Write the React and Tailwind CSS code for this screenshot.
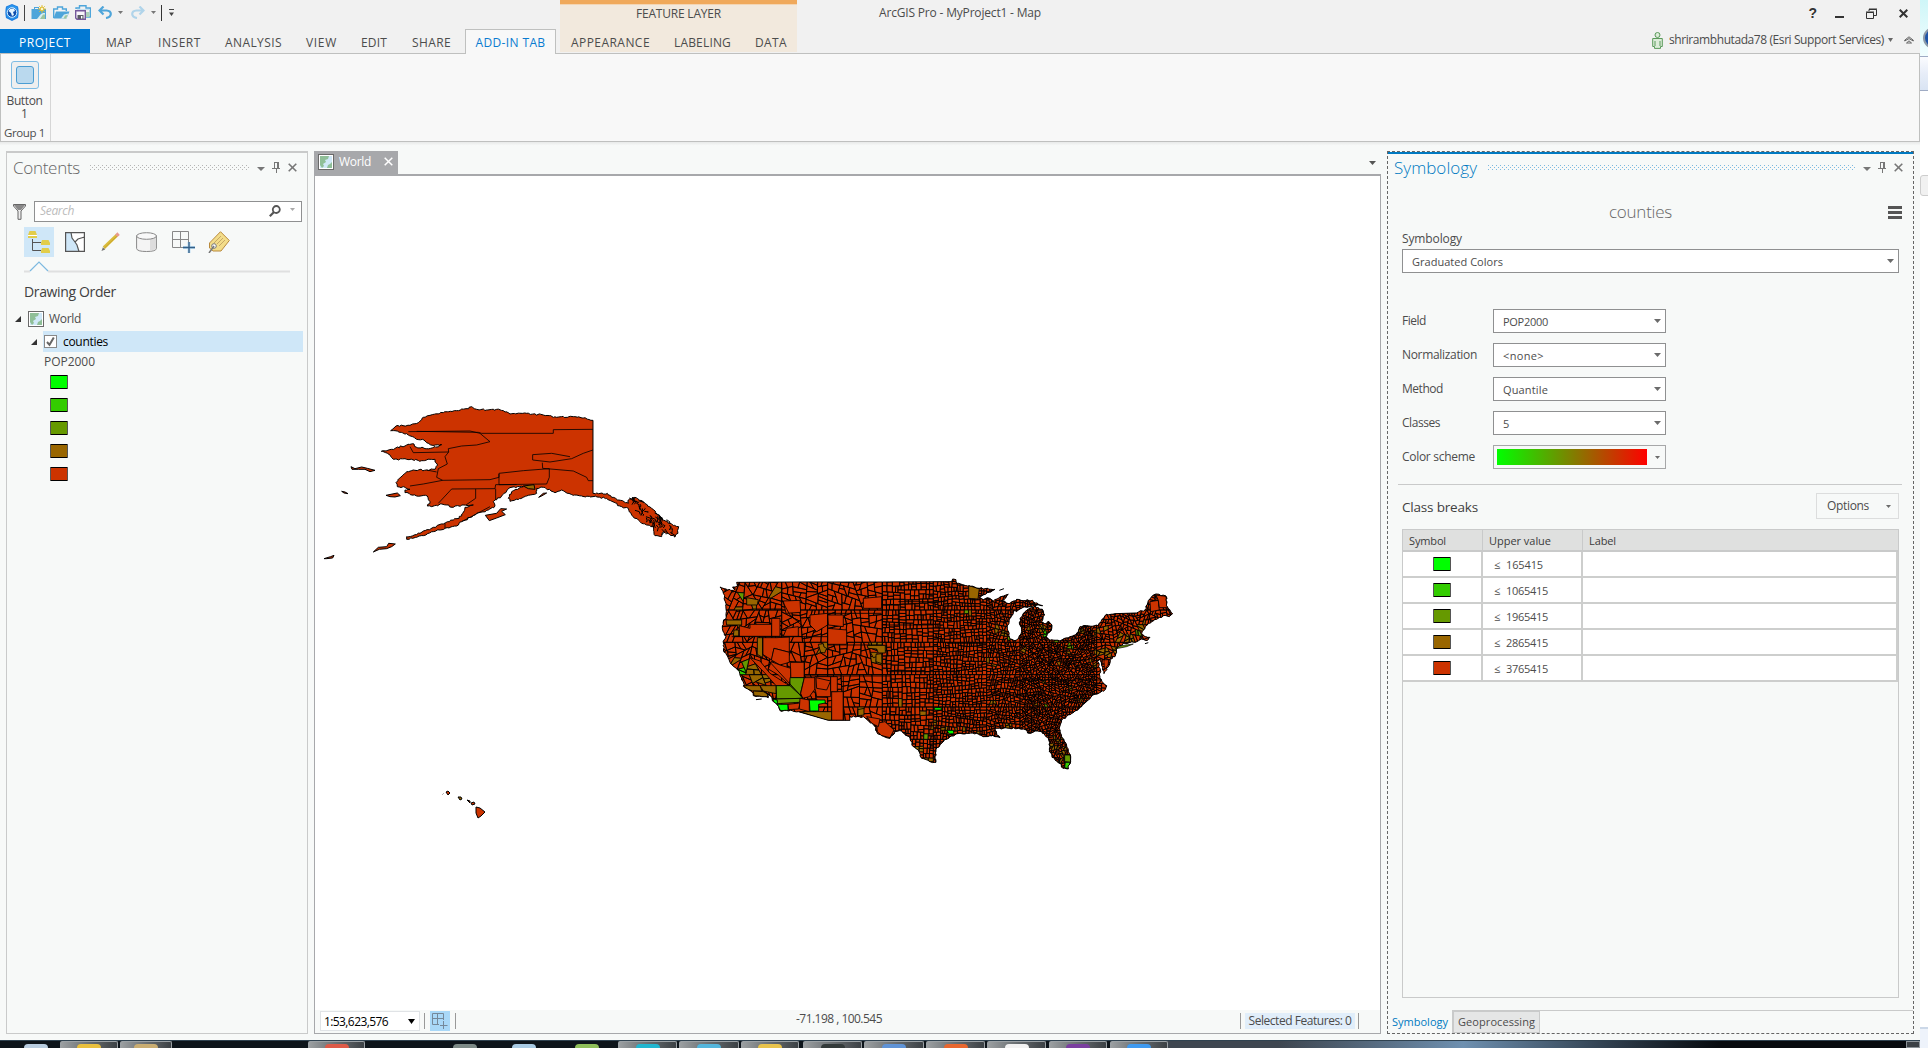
import React, { useLayoutEffect, useRef, useState } from "react";

/* Text run whose tracking is fitted to a given width. */
function T({ w, className = "", children }) {
  const ref = useRef(null);
  const [ls, setLs] = useState(0);
  useLayoutEffect(() => {
    if (!w) return;
    const el = ref.current;
    const n = el.textContent.length;
    const range = document.createRange();
    range.selectNodeContents(el);
    setLs((w - range.getBoundingClientRect().width) / n);
  }, [w]);
  return (
    <span ref={ref} className={"whitespace-nowrap shrink-0 " + className} style={{ letterSpacing: ls + "px" }}>
      {children}
    </span>
  );
}

const Caret = ({ className = "text-[#6b6b6b]", w = 6, h = 4 }) => (
  <svg className={"shrink-0 " + className} width={w} height={h} viewBox="0 0 6 4" preserveAspectRatio="none">
    <path d="M0 0H6L3 4Z" fill="currentColor" />
  </svg>
);

function Dots({ id, color, className }) {
  return (
    <svg className={"shrink-0 " + className} height="5" shapeRendering="crispEdges">
      <pattern id={id} width="4" height="4" patternUnits="userSpaceOnUse">
        <rect width="1" height="1" fill={color} />
        <rect x="2" y="2" width="1" height="1" fill={color} />
      </pattern>
      <rect width="100%" height="5" fill={`url(#${id})`} />
    </svg>
  );
}

const Pin = () => (
  <svg width="8" height="11" viewBox="0 0 8 11" fill="#777" shapeRendering="crispEdges">
    <path d="M2 0H6V1H2ZM2 0H3V7H2ZM5 0H7V7H5ZM0 6H8V7H0ZM4 7H5V11H4Z" />
  </svg>
);
const Cross = ({ c = "#777", s = 9, sw = 1.6 }) => (
  <svg width={s} height={s} viewBox="0 0 9 9" stroke={c} strokeWidth={sw}>
    <path d="M.7 .7L8.3 8.3M8.3 .7L.7 8.3" />
  </svg>
);
const MapIcon = () => (
  <svg className="shrink-0" width="16" height="16" viewBox="0 0 16 16">
    <rect x=".5" y=".5" width="15" height="15" fill="#fff" stroke="#6a6a6a" />
    <rect x="2" y="2" width="12" height="12" fill="#cfe8f7" />
    <path d="M2 2H11L10 5L7 6L8 8L5 10L6 12L4 14L2 11ZM14 8V14H9L10 11L12 10Z" fill="#8fbf98" />
  </svg>
);

const Globe = () => (
  <svg width="14" height="17" viewBox="0 0 14 17">
    <path d="M7 0L13 2.5Q14.3 8.5 13 14L7 17L1 14Q-.3 8.5 1 2.5Z" fill="#1f7fe0" />
    <path d="M7 1L12 3Q13 8 12 13L7 15.5L2 13Q1 8 2 3Z" fill="#2c97ee" />
    <circle cx="7" cy="8.5" r="4.8" fill="#0d4fae" stroke="#d9f0ff" />
    <path d="M5 5L9 4.5L10 7L8 8L9 11L7 12L6 9L3.5 7Z" fill="#e6f6ff" />
  </svg>
);
const NewProj = () => (
  <svg width="16" height="15" viewBox="0 0 16 15">
    <path d="M.5 14V4H3V2H8V4H15V14Z" fill="#4ea5da" />
    <path d="M4 3H7V4H4Z" fill="#f1f1f1" />
    <path d="M6 14L10 9L12 8H14V14Z" fill="#d7edf0" />
    <path d="M9 14L12 9.5H14V14Z" fill="#9cc59f" />
    <g stroke="#e3c02e" strokeWidth=".9"><path d="M11 0V8M7 4H15M8.2 1.2L13.8 6.8M13.8 1.2L8.2 6.8" /></g>
    <circle cx="11" cy="4" r="1.9" fill="#fff6c7" stroke="#dcb92b" />
  </svg>
);
const OpenProj = () => (
  <svg width="17" height="13" viewBox="0 0 17 13">
    <path d="M.7 12V3H4.5V1H9.5V3H13.3V5" fill="#f4f4f4" stroke="#4ea5da" strokeWidth="1.4" />
    <path d="M3 5.5H16.5L13.5 12.5H.5Z" fill="#4ea5da" />
    <path d="M8 12.5L11 8.5L15.3 7.5L13.5 12.5Z" fill="#d7edf0" />
    <path d="M10.5 12.5L12 9.5L14.5 9L13.2 12.5Z" fill="#9cc59f" />
  </svg>
);
const SaveProj = () => (
  <svg width="16" height="15" viewBox="0 0 16 15">
    <path d="M1 4V3H4.5V.8H11V3H15.3V12H11" fill="none" stroke="#4ea5da" strokeWidth="1.4" />
    <path d="M2 4H15V5H2Z" fill="#c5e0f1" />
    <path d="M11 7H14.5V12H11Z" fill="#a9d0b6" />
    <path d="M.7 5.7H10.3V14.3H2L.7 13Z" fill="#f7f3fa" stroke="#75579b" strokeWidth="1.4" />
    <path d="M2.5 10H8.5V14H2.5Z" fill="#5b5b66" />
    <path d="M6 11H7.4V13.5H6Z" fill="#fff" />
  </svg>
);
const Undo = ({ flip, c }) => (
  <svg width="14" height="13" viewBox="0 0 14 13" className={flip ? "-scale-x-100" : ""} fill="none" stroke={c} strokeWidth="2.2">
    <path d="M5.5 .5L1.5 4.5L5.5 8.5M2 4.5H8.5Q12.8 4.8 12.8 8Q12.6 11.4 8 12" />
  </svg>
);

const tabs = [["MAP", 26, "ml-4"], ["INSERT", 43, "ml-[26px]"], ["ANALYSIS", 57, "ml-[24px]"], ["VIEW", 31, "ml-[24px]"], ["EDIT", 26, "ml-[24px]"], ["SHARE", 39, "ml-[25px]"]];

function Header() {
  return (
    <header className="flex h-[53px] bg-[#f1f1f1] text-[12px] text-[#4c4c4c]">
      <div className="flex w-[560px] shrink-0 flex-col">
        <div className="flex h-[29px] items-center pb-[4px] pl-[5px]">
          <Globe />
          <i className="ml-[5px] h-4 w-px bg-[#444]" />
          <span className="ml-[6px]"><NewProj /></span>
          <span className="ml-[6px]"><OpenProj /></span>
          <span className="ml-[5px]"><SaveProj /></span>
          <span className="ml-[7px]"><Undo c="#4ea5da" /></span>
          <Caret className="ml-[6px] text-[#777]" w={5} h={3} />
          <span className="ml-[8px]"><Undo flip c="#b0d4ea" /></span>
          <Caret className="ml-[6px] text-[#777]" w={5} h={3} />
          <i className="ml-[5px] h-4 w-px bg-[#333]" />
          <svg className="ml-[7px]" width="5" height="7" viewBox="0 0 5 7"><path d="M0 0H5V1H0ZM0 3.5H5L2.5 7Z" fill="#444" /></svg>
        </div>
        <div className="flex h-6 items-center">
          <div className="flex h-6 w-[90px] items-center justify-center bg-[#0078d2] pb-px pt-1 text-white"><T w={52}>PROJECT</T></div>
          {tabs.map(([t, w, m]) => <T key={t} w={w} className={m + " pt-[3px]"}>{t}</T>)}
          <div className="relative z-10 ml-[14px] flex h-[25px] w-[91px] shrink-0 items-center justify-center self-start border border-b-0 border-[#bfc0bf] bg-[#f8f8f8] pt-[2px] text-[#0a7bd0]"><T w={70}>ADD-IN TAB</T></div>
        </div>
      </div>
      <div className="flex h-[52px] w-[237px] shrink-0 flex-col border-t-4 border-[#f0a95b] bg-[#f2e9dd]">
        <div className="h-px bg-[#f4d5b3]" />
        <div className="flex h-[19px] justify-center"><T w={85} className="leading-[17px]">FEATURE LAYER</T></div>
        <div className="flex flex-1 items-center pl-[11px] pt-[9px]">
          <T w={79}>APPEARANCE</T><T w={57} className="ml-[24px]">LABELING</T><T w={32} className="ml-[24px]">DATA</T>
        </div>
      </div>
      <div className="flex flex-1 flex-col">
        <div className="flex h-[26px] items-center pl-[82px] pr-[12px]">
          <T w={162}>ArcGIS Pro - MyProject1 - Map</T>
          <span className="ml-auto mr-[2px] font-['Liberation_Sans'] text-[14px] font-semibold leading-none text-[#333]">?</span>
          <svg className="ml-[15px]" width="10" height="12"><path d="M1 9H10V11H1Z" fill="#333" /></svg>
          <svg className="ml-[22px]" width="11" height="11" viewBox="0 0 11 11" fill="none" stroke="#333"><path d="M.5 4.5H7.5V10.5H.5ZM0 4H8M3 3V1.5H10.5V7.5H8M3 1H11" /></svg>
          <span className="ml-[22px]"><Cross c="#333" s={9} sw={2} /></span>
        </div>
        <div className="flex flex-1 items-center justify-end pr-[6px] pt-px">
          <svg width="11" height="17" viewBox="0 0 11 17" fill="#dcecd9" stroke="#5b9a5b"><circle cx="5.5" cy="3" r="2.5" /><path d="M.7 6.5H10.3V14.5H8.5V16.4H2.5V14.5H.7ZM3 9V14M8 9V14" /></svg>
          <T w={215} className="ml-[6px]">shrirambhutada78 (Esri Support Services)</T>
          <Caret className="ml-[4px] text-[#666]" w={5} h={4} />
          <svg className="ml-[11px]" width="10" height="8" viewBox="0 0 10 8" fill="none" stroke="#555" strokeWidth=".9"><path d="M.7 4.2L5 .8L9.3 4.2V5L5 2.6L.7 5ZM2.5 7L5 4.8L7.5 7Z" /></svg>
        </div>
      </div>
    </header>
  );
}

function Ribbon() {
  return (
    <section className="flex h-[89px] border border-[#bfc0bf] bg-[#f8f8f8] text-[12px] text-[#4c4c4c]">
      <div className="flex w-[50px] shrink-0 flex-col items-center border-r border-[#d6d6d6] pr-[2px]">
        <div className="mt-[7px] flex h-7 w-7 items-center justify-center rounded-[3px] border border-[#7fbce4] bg-[#efefef]">
          <div className="h-[18px] w-[18px] rounded-[3px] border border-[#4b9dd3] bg-[#bad9ee]" />
        </div>
        <T w={36} className="mt-[5px] leading-[13px]">Button</T>
        <span className="leading-[13px]">1</span>
        <T w={41} className="mt-[5px] text-[11.5px] leading-[16px]">Group 1</T>
      </div>
    </section>
  );
}

const classes = [["#00ff00", "165415", 37], ["#33cc00", "1065415", 42], ["#669900", "1965415", 42], ["#996600", "2865415", 42], ["#cc3300", "3765415", 42]];
const Swatch = ({ c }) => (
  <svg width="18" height="14" className="block"><rect x=".5" y=".5" width="17" height="13" fill={c} stroke="#555" /><path d="M1 .5H17M1 13.5H17" stroke="#000" /></svg>
);

function Contents() {
  const g = { fill: "none", stroke: "#777" };
  return (
    <aside className="flex w-[302px] shrink-0 flex-col border border-t-2 border-[#c9caca] text-[12px] text-[#4c4c4c]">
      <div className="flex h-[29px] items-center pl-[6px]">
        <T w={67} className="text-[17px] font-light text-[#666]">Contents</T>
        <Dots id="dc" color="#b5b5b5" className="ml-[10px] w-[160px]" />
        <Caret className="ml-[7px] mt-[3px] text-[#777]" w={8} h={4} />
        <span className="ml-[7px]"><Pin /></span><span className="ml-[8px]"><Cross /></span>
      </div>
      <div className="mt-[18px] flex h-[22px] items-center pl-[6px]">
        <svg width="13" height="17" viewBox="0 0 13 17"><path d="M.5 1.5V3L5 8V16.3H8V8L12.5 3V1.5Z" fill="#ececec" stroke="#666" /><path d="M1 2H12L8 7H5Z" fill="#888" /></svg>
        <div className="ml-[8px] flex h-[21px] w-[268px] items-center border border-[#8f9091] bg-white pl-[5px] pr-[6px]">
          <T w={34} className="italic text-[#bcbcbc]">Search</T>
          <svg className="ml-auto" width="12" height="12" viewBox="0 0 12 12" fill="none" stroke="#555" strokeWidth="1.8"><circle cx="7.3" cy="4.5" r="3.5" /><path d="M5 7L.8 11.2" strokeWidth="2.2" /></svg>
          <Caret className="ml-[9px] mb-1 text-[#aaa]" w={5} h={3} />
        </div>
      </div>
      <div className="mt-[5px] flex h-[30px] items-center pl-[17px]">
        <div className="flex h-[30px] w-[30px] items-center justify-center bg-[#cfe7f8]">
          <svg width="22" height="22" viewBox="0 0 22 22"><path d="M4.5 8V19.5H13M4.5 11.5H13" {...g} stroke="#555" /><path d="M1.5 0H7.5L9 4V7H0V4ZM14 9H20.5L22 12V14H13V12ZM14 17H20.5L22 20V22H13V20Z" fill="#e2cd4a" /><path d="M0 4.5H9" stroke="#fff" /></svg>
        </div>
        <svg className="ml-[11px]" width="20" height="20" viewBox="0 0 20 20"><path d="M.5 .5H19.5V19.5H.5Z" fill="#fff" /><path d="M.5 .5H6L7 6L10 10L12 13L14 19.5H.5Z" fill="#cfe7f8" /><path d="M.6 .6H19.4V19.4H.6ZM6 .5L7 6L10 10L12 13L14 19.5M10 10L13 7L19.5 5" {...g} stroke="#555" strokeWidth="1.2" /></svg>
        <svg className="ml-[16px]" width="20" height="20" viewBox="0 0 21 20"><path d="M3 16L16.5 3" stroke="#d9bb3c" strokeWidth="3.4" /><path d="M3.5 16.5L16.8 3.8" stroke="#c9a426" /><path d="M16 3.5L18.5 1.2" stroke="#e89a8e" strokeWidth="3.6" /><path d="M.5 19.5L2 15.5L4.5 18Z" fill="#777" /></svg>
        <svg className="ml-[15px]" width="21" height="20" viewBox="0 0 21 20"><path d="M.6 3.5V16.5Q1 19.5 10.5 19.5T20.4 16.5V3.5" fill="#f4f4f4" stroke="#888" /><path d="M14 6V19L20 17V4Z" fill="#ddd" /><ellipse cx="10.5" cy="4" rx="9.9" ry="3.3" fill="#f8f8f8" stroke="#888" /></svg>
        <svg className="ml-[15px]" width="23" height="23" viewBox="0 0 23 23"><path d="M.5 .5H16.5V16.5H.5ZM8.5 .5V16.5M.5 8.5H16.5" {...g} stroke="#888" /><path d="M17 11V22M11 16.5H23" stroke="#bfe0f6" strokeWidth="3" /><path d="M17 11V22M11 16.5H23" stroke="#355f86" strokeWidth="1.4" /></svg>
        <svg className="ml-[13px]" width="22" height="22" viewBox="0 0 22 22"><path d="M1.5 12L12.5 .7L21.3 9.5L13 20H5L1.5 17Z" fill="#f3dd8a" stroke="#b98a3d" /><path d="M6 12L13 5M9 13L15 7M11 15L17 9" stroke="#c7a868" /><circle cx="6" cy="15" r="2.3" fill="#fff" stroke="#777" /><path d="M6 15L1 22" stroke="#777" strokeWidth="1.5" /></svg>
      </div>
      <svg className="ml-[17px] mt-[4px]" width="266" height="12" viewBox="0 0 266 12" fill="none"><path d="M0 10.5H6M24 10.5H266" stroke="#dfe0e0" strokeWidth="2" /><path d="M6 10L15 1L24 10" stroke="#7cb9e0" strokeWidth="1.2" /></svg>
      <T w={92} className="ml-[17px] mt-[8px] self-start text-[14px] font-medium leading-[22px] text-[#404040]">Drawing Order</T>
      <div className="mt-[7px] flex h-[18px] items-center pl-[8px]">
        <svg width="6" height="6"><path d="M6 0V6H0Z" fill="#333" /></svg>
        <span className="ml-[7px]"><MapIcon /></span><T w={32} className="ml-[5px]">World</T>
      </div>
      <div className="mt-[3px] flex h-[21px] items-center pl-[24px]">
        <svg width="6" height="6"><path d="M6 0V6H0Z" fill="#333" /></svg>
        <div className="ml-[6px] flex h-[21px] w-[260px] items-center bg-[#cfe7f8] pl-px">
          <svg width="13" height="13" viewBox="0 0 13 13"><rect x=".5" y=".5" width="12" height="12" fill="#fff" stroke="#888" /><path d="M3 7L5.5 9.8L9.8 2.5" fill="none" stroke="#666" strokeWidth="2" /></svg>
          <T w={45} className="ml-[6px] text-black">counties</T>
        </div>
      </div>
      <T w={51} className="ml-[37px] mt-px self-start leading-[18px]">POP2000</T>
      <div className="ml-[43px] mt-[4px] flex flex-col gap-[9px]">{classes.map(([c]) => <Swatch key={c} c={c} />)}</div>
    </aside>
  );
}

/* ---- Map geometry ---- */
function rng(seed) {
  let s = seed;
  return () => ((s = (s * 1664525 + 1013904223) >>> 0) / 4294967296);
}
const parse = (str) => str.trim().split(/\s+/).map((p) => p.split(",").map(Number));
const toPath = (pts) => "M" + pts.map((p) => p[0].toFixed(1) + " " + p[1].toFixed(1)).join("L") + "Z";
function roughen(pts, amp, maxLen, seed) {
  const r = rng(seed);
  const out = [];
  pts.forEach((a, i) => {
    const b = pts[(i + 1) % pts.length];
    const d = Math.hypot(b[0] - a[0], b[1] - a[1]);
    out.push(a);
    if (d > 8 && d < maxLen) {
      const n = Math.round(d / 6);
      for (let k = 1; k < n; k++) {
        out.push([a[0] + ((b[0] - a[0]) * k) / n + (r() - 0.5) * amp, a[1] + ((b[1] - a[1]) * k) / n + (r() - 0.5) * amp]);
      }
    }
  });
  return out;
}
const US = parse(`60,66 78,72 100,76 106,72 98,66 112,64 110,52 300,51 547,51 755,50 758,42 768,44 770,55 808,62 838,70 885,73 868,82 850,90 838,99 850,104 862,98 880,108 900,96 925,88 918,98 903,108 930,115 950,103 970,107 998,106 1006,114 1028,122 1000,122 975,126 960,132 950,140 944,136 938,150 928,162 922,190 930,222 945,227 956,218 965,200 960,180 960,160 975,140 990,130 1005,124 1030,138 1034,150 1025,172 1035,177 1045,168 1056,180 1054,196 1042,205 1038,216 1050,226 1080,228 1110,215 1135,202 1140,185 1160,182 1195,182 1205,165 1220,148 1245,146 1310,144 1335,135 1348,103 1365,88 1398,93 1402,125 1418,146 1408,155 1390,152 1370,163 1345,175 1335,190 1325,205 1335,215 1350,217 1343,226 1325,222 1305,232 1270,235 1250,250 1250,262 1245,275 1230,283 1228,300 1212,326 1205,300 1200,282 1193,290 1200,310 1200,335 1206,350 1220,362 1216,374 1192,387 1185,388 1165,405 1145,425 1125,438 1105,450 1085,465 1078,490 1085,515 1098,535 1108,565 1112,590 1105,612 1090,610 1078,595 1065,585 1048,560 1050,545 1045,520 1025,500 1005,498 990,505 970,492 930,490 905,492 885,490 890,505 900,518 885,515 870,512 850,515 830,505 800,505 780,505 750,515 730,530 712,548 705,575 708,592 690,590 665,580 655,555 640,545 630,520 605,498 585,500 570,520 545,512 530,500 525,485 505,468 490,455 450,455 450,466 385,466 295,440 262,437 240,437 232,420 220,410 215,395 200,386 205,398 185,395 160,392 155,380 135,368 125,345 118,320 90,292 85,280 70,255 72,225 78,215 68,195 70,178 78,150 76,110 70,85`);
const AK = parse(`242,122 258,108 300,106 325,98 340,82 360,76 400,68 440,62 468,56 485,50 500,58 530,60 560,58 580,62 600,72 650,70 700,75 740,82 790,80 820,84 849,91 849,310 880,312 892,310 905,322 955,340 955,330 975,322 1000,335 1025,355 1060,390 1085,402 1106,410 1104,430 1095,440 1078,432 1060,425 1055,440 1035,437 1030,410 1010,405 995,400 985,390 965,375 955,355 935,350 890,325 849,320 790,316 755,300 735,308 700,292 680,295 680,310 640,322 600,334 595,325 605,305 640,290 600,293 575,318 550,335 555,348 535,360 500,370 455,395 440,408 405,415 370,425 340,437 320,442 290,448 290,440 330,430 370,412 400,402 430,390 455,378 465,352 490,345 455,345 430,352 410,345 395,342 365,350 352,348 360,335 352,318 320,318 285,308 285,300 300,298 285,292 262,290 258,278 290,245 310,240 350,240 375,238 383,225 375,208 350,210 335,212 290,208 250,208 240,195 214,184 245,178 290,165 312,162 320,172 362,175 395,164 372,166 350,158 342,150 320,148 295,135 255,122`);
const akIslands = ["123,230 135,236 155,231 172,235 195,241 180,245 165,238 145,238 126,238", "95,304 105,306 114,311 102,309", "228,316 262,309 271,317 255,321 240,320", "190,486 205,472 230,470 236,460 256,462 245,470 230,476 208,478", "42,506 62,500 72,496 68,504 50,506", "526,376 560,370 572,356 590,357 575,364 586,374 560,384 538,392", "686,322 700,310 710,309 695,318"].map(parse);
const akLines = "M295,125L480,123L510,130L540,155L500,165L455,168L415,176L416,186L310,188L300,170M320,124L505,127L515,130L730,130V119L849,118M416,186L405,200L412,222L385,236L380,262L398,271L540,269L567,262V250L640,242L718,236V262L710,282L567,284V252M398,271L340,282L300,288M849,180L820,190L785,206L720,216L668,210V194L725,190L780,200M697,218L698,235L790,243L830,262L835,272H849M385,340L425,297L555,296L557,284H620M497,297V325L468,345M557,296V330M455,395L540,350M350,240L380,246M405,400V414";
const cityCells = [
  [130, 84, 14, 2], [158, 110, 16, 3], [110, 132, 14, 3], [232, 84, 8, 3], [115, 172, 12, 3], [106, 202, 9, 3], [262, 183, 8, 3], [366, 250, 17, 3], [520, 250, 18, 3], [545, 250, 12, 3], [530, 285, 14, 3], [482, 440, 12, 3],
  [120, 285, 14, 3], [135, 300, 8, 2], [130, 324, 9, 1], [160, 320, 24, 3], [190, 345, 20, 3], [798, 144, 6, 2], [808, 140, 10, 3], [890, 190, 10, 3], [912, 208, 10, 3], [928, 218, 6, 2], [985, 190, 8, 3], [1034, 204, 9, 1], [1025, 190, 12, 3], [1070, 228, 9, 2], [1145, 196, 9, 3], [1188, 205, 9, 3], [1112, 245, 10, 2], [1108, 262, 7, 3], [1220, 190, 10, 3], [1200, 200, 8, 3], [1260, 220, 12, 3], [1290, 222, 16, 3], [1315, 205, 7, 2], [1320, 190, 10, 3], [1330, 178, 8, 3], [1245, 255, 12, 3], [1215, 262, 12, 3], [1190, 265, 12, 3], [1230, 275, 8, 3], [1170, 288, 8, 3], [1185, 298, 8, 3], [1075, 300, 6, 3], [975, 255, 8, 3], [865, 290, 8, 3], [880, 296, 6, 3], [790, 315, 6, 3], [600, 412, 7, 3], [672, 445, 8, 3], [705, 470, 9, 3], [697, 485, 8, 3], [678, 512, 7, 2], [655, 552, 12, 3], [685, 585, 9, 3], [735, 492, 7, 3], [768, 495, 8, 3], [790, 495, 8, 3], [835, 500, 8, 3], [880, 412, 6, 3], [925, 480, 8, 3], [948, 478, 6, 3], [1030, 350, 6, 3], [1112, 372, 6, 3], [1140, 405, 6, 3], [1090, 520, 8, 3], [1075, 525, 8, 3], [1062, 515, 7, 3], [1056, 545, 10, 3], [1072, 548, 8, 3], [1085, 565, 8, 3], [1080, 590, 8, 3], [1095, 548, 8, 3], [985, 130, 4, 3], [1040, 425, 5, 2], [1010, 420, 6, 3],
];
const bigCells = [
  ["188,218 230,218 268,216 268,262 222,250 215,285 188,268", 4], ["172,218 188,218 188,278 172,268", 3], ["222,250 268,262 268,292 240,300 214,285", 4], ["271,292 313,292 313,338 272,338", 4],
  ["214,290 240,300 272,310 272,338 268,360 235,330 205,312", 4], ["150,278 180,288 210,325 268,362 228,362 200,330", 4], ["270,338 313,338 300,392 270,362", 2], ["228,362 270,362 298,388 308,400 230,402", 2],
  ["230,402 308,400 298,412 232,416", 2], ["132,362 180,362 186,378 158,378 140,372", 3], ["180,362 228,362 228,386 190,378", 3], ["160,378 190,380 205,388 200,396 162,392", 3],
  ["232,418 264,418 264,437 242,437 234,424", 0], ["220,402 232,406 232,418 222,412", 0], ["264,418 300,414 296,432 266,434", 4], ["300,400 328,405 328,440 298,432", 4], ["328,405 375,405 376,414 356,418 356,438 330,438", 0],
  ["298,440 395,440 395,466 378,466", 3], ["395,380 430,380 430,466 395,466", 4], ["313,338 345,338 345,372 328,395 308,400 302,385", 4], ["345,335 392,335 392,395 350,395 345,370", 4], ["392,335 412,335 412,380 392,380", 4],
  ["806,62 838,71 834,102 806,100", 3], ["140,98 175,104 172,120 140,120", 3], ["250,108 300,106 302,142 258,145", 4], ["150,178 215,178 215,214 118,214 118,182 150,190", 4], ["215,160 240,160 240,214 215,214", 4],
  ["260,190 295,185 295,214 250,214", 4], ["78,165 125,165 125,180 80,180", 3], ["348,338 392,348 380,375 350,370", 4], ["330,150 383,145 383,180 350,200 330,180", 4], ["383,150 430,150 430,185 385,180", 4],
  ["383,190 440,195 440,238 383,238", 4], ["490,100 545,95 545,130 490,130", 4], ["530,475 555,470 582,495 570,518 545,512 532,500", 4], ["500,455 540,462 535,485 515,475", 4],
  ["1350,110 1375,106 1378,135 1352,140", 4], ["1368,90 1398,94 1402,128 1378,128 1375,106", 4], ["102,195 116,195 116,213 100,213", 3],
  ["502,241 556,241 556,264 535,264 530,252 504,250", 3], ["511,262 532,262 530,275 520,278", 3], ["528,268 545,266 546,296 528,290", 3], ["355,238 370,236 372,246 380,250 374,264 362,262", 3],
  ["703,428 724,428 724,435 703,435", 0], ["740,496 760,496 762,506 748,507", 0], ["1094,570 1111,570 1112,592 1094,590", 2], ["1096,592 1111,592 1105,611 1094,608", 1], ["474,434 492,430 492,450 474,452", 3],
].map(([p, c]) => [toPath(parse(p)), c]);
const stateLines = "M547,51V240M383,145V240M383,145H545M383,240H547M313,215V338M95,215H383M313,333H571M430,333V466M571,320V450M188,215V268L310,400M245,55V105L270,150L310,185M110,140L160,132H245M595,110H740M547,120H595V180M547,180H700M571,320H780M571,450H640M740,235H860M770,290V345M860,390H1050M900,345H1210M560,240V320M1050,230V300M1165,180V260";

/* Recursive cutting of the land into counties: [mean area, tilt of the cuts] by longitude. */
const density = (x, y) =>
  x < 250 ? [420, 0.7] : x < 385 ? [y < 215 ? 400 : 520, 0.6] : x < 545 ? [430, 0.4] : x < 690 ? [y > 460 ? 170 : 210, 0.07] : x < 860 ? [y > 430 ? 110 : 130, 0.16] : x < 960 ? [105, 0.4] : x < 1190 ? [74, 0.7] : [150, 0.6];
function cut(poly, nx, ny, c) {
  const out = [[], []];
  poly.forEach((a, i) => {
    const b = poly[(i + 1) % poly.length];
    const da = a[0] * nx + a[1] * ny - c;
    const db = b[0] * nx + b[1] * ny - c;
    out[da <= 0 ? 0 : 1].push(a);
    if (da <= 0 !== db <= 0) {
      const t = da / (da - db);
      const m = [a[0] + (b[0] - a[0]) * t, a[1] + (b[1] - a[1]) * t];
      out[0].push(m);
      out[1].push(m);
    }
  });
  return out;
}
function buildCounties() {
  const r = rng(11);
  const done = [];
  const stack = [];
  for (const [x0, x1] of [[55, 245], [245, 383], [383, 547], [547, 700], [700, 860], [860, 960], [960, 1190], [1190, 1425]]) {
    for (let y = 38; y < 620; y += 97) stack.push([[x0, y], [x1, y], [x1, y + 97], [x0, y + 97]]);
  }
  while (stack.length) {
    const poly = stack.pop();
    let area = 0;
    let cx = 0;
    let cy = 0;
    poly.forEach((a, i) => {
      const b = poly[(i + 1) % poly.length];
      area += (a[0] * b[1] - b[0] * a[1]) / 2;
      cx += a[0] / poly.length;
      cy += a[1] / poly.length;
    });
    area = Math.abs(area);
    const [target, tilt] = density(cx, cy);
    if (area < target * (0.9 + r() * 0.9) || poly.length < 3) {
      const hit = cityCells.find((c) => Math.hypot(c[0] - cx, c[1] - cy) < c[2] * 0.85);
      done.push({ d: toPath(poly), c: hit ? hit[3] : 4 });
      continue;
    }
    const xs = poly.map((p) => p[0]);
    const ys = poly.map((p) => p[1]);
    const wide = Math.max(...xs) - Math.min(...xs) > (Math.max(...ys) - Math.min(...ys)) * (0.85 + r() * 0.3);
    const t = (r() - 0.5) * 2 * tilt;
    const nx = wide ? 1 : t;
    const ny = wide ? t : 1;
    const sx = cx + (r() - 0.5) * Math.sqrt(area) * 0.3;
    const sy = cy + (r() - 0.5) * Math.sqrt(area) * 0.3;
    stack.push(...cut(poly, nx, ny, nx * sx + ny * sy).filter((p) => p.length > 2));
  }
  return done;
}
const counties = buildCounties();
const groups = classes.map((_, i) => counties.filter((k) => k.c === i).map((k) => k.d).join(""));
const usPath = toPath(roughen(US, 5, 60, 3));
const akPath = toPath(roughen(AK, 5, 60, 5));
const panhandle = (() => {
  const r = rng(21);
  let d = "";
  for (let i = 0; i < 46; i++) {
    const t = r();
    const x = 958 + t * 130;
    const y = 335 + t * 82 + (r() - 0.5) * 42;
    d += `M${x.toFixed(0)},${y.toFixed(0)}l${(r() * 16).toFixed(0)},${(r() * 14).toFixed(0)}l${(r() * 12 - 8).toFixed(0)},${(r() * 14).toFixed(0)}`;
  }
  return d;
})();

function CountyMap() {
  return (
    <svg className="block" width="1065" height="834" viewBox="315 176 1065 834">
      <clipPath id="us"><path d={usPath} /></clipPath>
      <g transform="translate(310 390) scale(.3333)" stroke="#000" strokeWidth="3" strokeLinejoin="round">
        <path d={akPath} fill="#cc3300" />
        {akIslands.map((p, i) => <path key={i} d={toPath(p)} fill="#cc3300" />)}
        <path d={akLines} fill="none" strokeOpacity=".8" />
        <path d={panhandle} fill="none" />
        <path d="M640,288L672,284L675,298L655,296Z" fill="#996600" />
      </g>
      <g transform="translate(700 565) scale(.3333)" stroke="#000" strokeLinejoin="round">
        <g clipPath="url(#us)">
          <path d={usPath} fill="#cc3300" />
          {[4, 3, 2, 1, 0].map((i) => <path key={i} d={groups[i]} fill={classes[i][0]} strokeWidth="2.5" />)}
          {bigCells.map(([d, c], i) => <path key={i} d={d} fill={classes[c][0]} strokeWidth="2.6" />)}
          <path d={stateLines} fill="none" strokeWidth="2.6" />
        </g>
        <path d={usPath} fill="none" strokeWidth="3" />
        <path d="M1245,252L1265,242L1300,237L1280,245L1255,250Z" fill="#669900" strokeWidth="2" />
        <path d="M1212,285L1226,284L1224,300L1214,314Z" fill="#cc3300" strokeWidth="2" />
        <path d="M898,76L912,71M168,404L185,402M1335,236L1345,233" strokeWidth="3" />
      </g>
      <g fill="#cc3300" stroke="#000">
        <path d="M446 792L448 791L450 793L448 795ZM467 800L470 801L470 803ZM471 803L474 802L475 804L472 805ZM476 807L480 808L485 812L481 816L478 818L476 813Z" />
        <path d="M458 797L461 797L462 799L460 800Z" fill="#996600" />
        <path d="M442.5 794.5L443.5 793.5" strokeOpacity=".6" />
      </g>
    </svg>
  );
}

function MapView() {
  return (
    <main className="flex w-[1067px] shrink-0 flex-col text-[12px] text-[#4c4c4c]">
      <div className="flex h-[23px] items-center">
        <div className="flex h-[23px] w-[84px] items-center bg-[#a7a8ab] pb-[2px] pl-[4px] text-white">
          <MapIcon /><T w={32} className="ml-[5px]">World</T><span className="ml-[13px]"><Cross c="#fff" s={9} sw={1.5} /></span>
        </div>
        <Caret className="ml-auto mr-[5px] mt-px text-[#555]" w={7} h={4} />
      </div>
      <div className="flex flex-1 flex-col border border-t-2 border-[#a7a8ab]">
        <div className="h-[834px] bg-white"><CountyMap /></div>
        <div className="flex h-[22px] items-center pl-[5px]">
          <div className="flex h-5 w-[100px] items-center justify-between border border-[#e0e3e6] bg-white pl-[3px] pr-[4px] text-black"><T w={64} className="pt-px">1:53,623,576</T><Caret className="text-black" w={7} h={5} /></div>
          <i className="ml-[4px] h-[16px] w-px bg-[#999]" />
          <div className="ml-[5px] flex h-5 w-5 items-center justify-center bg-[#a9d8f8]">
            <svg width="16" height="16" viewBox="0 0 16 16" fill="none" stroke="#75889a"><path d="M.5 .5H11.5V7M.5 .5V11.5H7M5.5 .5V11.5M.5 5.5H11.5M11.5 8V16M8 12.5H15.5" /></svg>
          </div>
          <i className="ml-[5px] h-[16px] w-px bg-[#999]" />
          <T w={86} className="ml-[340px] pb-[4px]">-71.198 , 100.545</T>
          <i className="ml-auto h-[16px] w-px bg-[#999]" />
          <div className="ml-[4px] flex h-4 w-[110px] items-center justify-center bg-[#e1eefa]"><T w={103}>Selected Features: 0</T></div>
          <i className="ml-[3px] mr-[21px] h-[16px] w-px bg-[#999]" />
        </div>
      </div>
    </main>
  );
}

const fields = [["Field", 24, "POP2000", 45], ["Normalization", 75, "<none>", 41], ["Method", 41, "Quantile", 45], ["Classes", 38, "5", 6]];

function Symbology() {
  return (
    <aside className="relative flex w-[527px] shrink-0 flex-col border border-dashed border-[#666] text-[12px] text-[#4c4c4c]">
      <div className="h-[2px] shrink-0 bg-[#0079c1]" />
      <div className="flex h-[27px] shrink-0 items-center pl-[6px]">
        <T w={83} className="text-[17px] font-light text-[#0079c1]">Symbology</T>
        <Dots id="ds" color="#7db9df" className="ml-[11px] w-[367px]" />
        <Caret className="ml-[8px] mt-[3px] text-[#777]" w={8} h={4} />
        <span className="ml-[7px]"><Pin /></span><span className="ml-[8px]"><Cross /></span>
      </div>
      <div className="mt-[19px] flex h-[24px] items-center pl-[221px]">
        <T w={63} className="-mt-px text-[17px] font-light text-[#666]">counties</T>
        <div className="ml-auto mr-[11px] flex w-[14px] flex-col gap-[2px]"><i className="h-[3px] bg-[#555]" /><i className="h-[3px] bg-[#555]" /><i className="h-[3px] bg-[#555]" /></div>
      </div>
      <T w={60} className="ml-[14px] mt-[6px] self-start leading-[18px]">Symbology</T>
      <div className="ml-[14px] mt-px flex h-6 w-[497px] items-center justify-between border border-[#8f9091] bg-white pl-[9px] pr-[4px] text-[11px]"><T w={91} className="pt-[2px]">Graduated Colors</T><Caret w={7} h={4} /></div>
      <div className="ml-[14px] mt-[36px] flex flex-col gap-[10px]">
        {fields.map(([l, lw, v, vw]) => (
          <div key={l} className="flex h-6 items-center">
            <div className="w-[91px]"><T w={lw}>{l}</T></div>
            <div className="flex h-6 w-[173px] items-center justify-between border border-[#8f9091] bg-white pl-[9px] pr-[4px] text-[11px]"><T w={vw} className="pt-[3px]">{v}</T><Caret w={7} h={4} /></div>
          </div>
        ))}
        <div className="flex h-6 items-center">
          <div className="w-[91px]"><T w={73}>Color scheme</T></div>
          <div className="flex h-6 w-[173px] items-center justify-between border border-[#a6a7a8] bg-[#f7f9f8] pl-[3px] pr-[5px]"><div className="h-4 w-[150px] bg-[linear-gradient(to_right,#00ff00,#ff0000)]" /><Caret w={5} h={3} /></div>
        </div>
      </div>
      <div className="ml-[10px] mt-[15px] h-px w-[504px] shrink-0 bg-[#c9caca]" />
      <div className="ml-[14px] mr-[14px] mt-[8px] flex h-[26px] items-center justify-between">
        <T w={76} className="pt-[2px] text-[13.5px] font-medium text-[#404040]">Class breaks</T>
        <div className="flex h-[26px] w-[83px] items-center justify-between border border-[#dcdddd] pl-[10px] pr-[7px]"><T w={42}>Options</T><Caret w={5} h={3} /></div>
      </div>
      <div className="ml-[14px] mt-[10px] flex h-[469px] w-[497px] shrink-0 flex-col border border-[#c9caca] text-[11px]">
        <div className="flex h-[22px] items-center border-b-2 border-[#c9caca] bg-[#dfe0df] font-medium text-[#3c3c3c]">
          <div className="flex h-full w-[80px] items-center border-r border-[#c9caca] pl-[6px] pt-[2px]"><T w={37}>Symbol</T></div>
          <div className="flex h-full w-[100px] items-center border-r border-[#c9caca] pl-[6px] pt-[2px]"><T w={62}>Upper value</T></div>
          <div className="pl-[6px] pt-[2px]"><T w={27}>Label</T></div>
        </div>
        {classes.map(([c, v, w]) => (
          <div key={c} className="flex h-[26px] shrink-0 border-b-2 border-[#cdcecd] bg-white">
            <div className="flex w-[80px] items-center justify-center border-r-2 border-[#cdcecd]"><Swatch c={c} /></div>
            <div className="flex w-[100px] items-center border-r-2 border-[#cdcecd] pl-[11px] pt-[2px]"><T w={6}>≤</T><T w={w} className="ml-[6px]">{v}</T></div>
            <div className="flex-1 border-r-2 border-[#cdcecd]" />
          </div>
        ))}
      </div>
      <div className="mt-[12px] flex h-[23px]">
        <div className="flex w-[64px] items-center pl-[4px] text-[11px] text-[#0079c1]"><T w={56} className="pt-px">Symbology</T></div>
        <div className="flex w-[88px] items-center justify-center border border-t-2 border-l-2 border-[#c9caca] bg-[#e5e6e6] text-[11px]"><T w={77}>Geoprocessing</T></div>
        <div className="flex-1 border-t border-[#c9caca]" />
      </div>
    </aside>
  );
}

const slots = [
  ["w-[60px] pl-3", null, "#b9cde0", false], ["w-[58px]", 1, "#e9c03e", true], ["w-[2px]"], ["w-[52px]", 1, "#c9ad72", true], ["w-[136px]"], ["w-[57px]", 1, "#dd5a48", true], ["w-[71px]"], ["w-[57px]", 0, "#7d8a87", false], ["w-[62px]", 0, "#a9cbe4", false], ["w-[63px]", 0, "#8fbf5a", false],
  ["w-[59px]", 1, "#22b6cf", true], ["w-[2px]"], ["w-[60px]", 1, "#54b6dc", true], ["w-[2px]"], ["w-[58px]", 1, "#e8c34c", true], ["w-[4px]"], ["w-[59px]", 1, "#333a3a", true], ["w-[2px]"], ["w-[60px]", 1, "#5f93d6", true], ["w-[2px]"], ["w-[59px]", 1, "#e8672f", true], ["w-[2px]"], ["w-[59px]", 1, "#f2f2f2", true], ["w-[3px]"], ["w-[58px]", 1, "#7b3fa0", true], ["w-[3px]"], ["w-[58px]", 1, "#3f9af0", true],
];
function Taskbar() {
  return (
    <footer className="flex h-2 w-[1920px] items-end overflow-hidden border-t border-[#2f4250] bg-linear-to-r from-[#0d141a] from-60% via-[#4c5866] via-62% to-[#4c5866] to-70%">
      {slots.map(([w, , c, on], i) => (
        <div key={i} className={w + " flex h-[7px] shrink-0 items-end justify-center " + (on ? "rounded-t-[2px] border border-b-0 border-[#9aa0a4] bg-linear-to-r from-[#9b9fa1] to-[#3c4145]" : "")}>
          {c && <i className="h-1 w-6 rounded-t-full" style={{ background: c }} />}
        </div>
      ))}
      <div className="h-[7px] flex-1 bg-linear-to-r from-[#3e4650] from-15% via-[#6e90b0] via-40% to-[#070a0e] to-75%" />
      <div className="h-[7px] w-[14px] border border-[#8b9298] bg-[#3b4045]" />
    </footer>
  );
}

export default function App() {
  return (
    <div className="flex h-[1048px] w-[1928px] overflow-hidden font-['Open_Sans','Noto_Sans',sans-serif]">
      <div className="flex w-[1920px] shrink-0 flex-col bg-[#f7f9f8]">
        <Header />
        <Ribbon />
        <div className="h-[9px] shrink-0 bg-linear-to-b from-[#e8e9e9] to-[#f7f9f8] to-40%" />
        <div className="mb-[6px] flex h-[883px] gap-[6px] pl-[6px]">
          <Contents /><MapView /><Symbology />
        </div>
        <Taskbar />
      </div>
      <div className="flex w-2 flex-col overflow-hidden bg-white">
        <div className="flex h-[56px] shrink-0 items-end bg-linear-to-b from-[#cff6f8] to-[#f1feff] pb-[7px] pl-[3px]"><i className="h-[22px] w-[22px] shrink-0 rounded-full border-2 border-[#8c9aa8] bg-[#1f56a8]" /></div>
        <div className="h-[35px] shrink-0 border-y border-[#9fabc4] bg-linear-to-b from-[#fbfcff] via-[#e7edf8] to-[#d9e4f3]" />
        <div className="mt-[84px] h-[21px] w-5 rounded-[3px] border border-[#cdcdcd] bg-[#f1f1f1]" />
        <div className="mt-auto h-[21px] border-t-2 border-[#ccd8e8] bg-[#eef3fb]" />
      </div>
    </div>
  );
}
